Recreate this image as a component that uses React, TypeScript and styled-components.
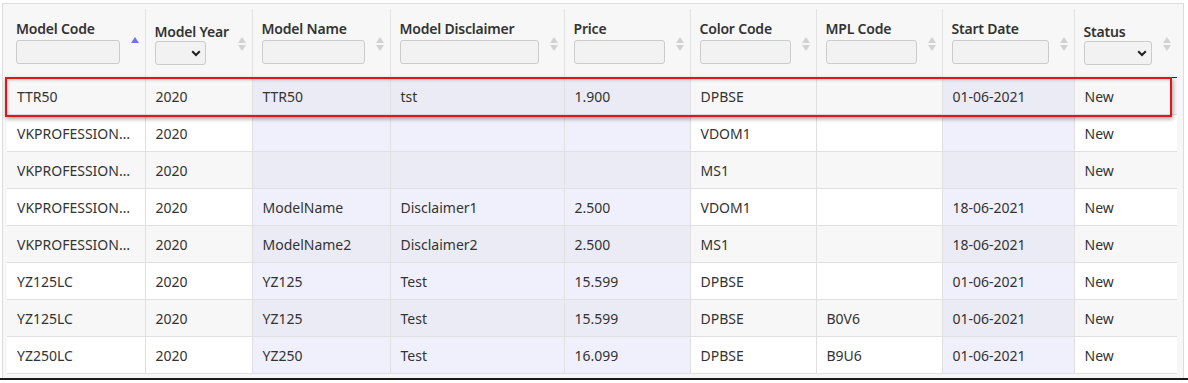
import styled, { createGlobalStyle } from 'styled-components';

type SortState = 'asc' | 'none';

interface Column {
  title: string;
  filter: 'input' | 'select';
  selectWidth?: number;
  sort: SortState;
  tinted?: boolean;
  width: number;
}

const columns: Column[] = [
  { title: 'Model Code', filter: 'input', sort: 'asc', width: 138 },
  { title: 'Model Year', filter: 'select', selectWidth: 51, sort: 'none', width: 107 },
  { title: 'Model Name', filter: 'input', sort: 'none', tinted: true, width: 138 },
  { title: 'Model Disclaimer', filter: 'input', sort: 'none', tinted: true, width: 174 },
  { title: 'Price', filter: 'input', sort: 'none', tinted: true, width: 126 },
  { title: 'Color Code', filter: 'input', sort: 'none', width: 126 },
  { title: 'MPL Code', filter: 'input', sort: 'none', width: 126 },
  { title: 'Start Date', filter: 'input', sort: 'none', tinted: true, width: 132 },
  { title: 'Status', filter: 'select', sort: 'none', width: 103 },
];

const rows: string[][] = [
  ['TTR50', '2020', 'TTR50', 'tst', '1.900', 'DPBSE', '', '01-06-2021', 'New'],
  ['VKPROFESSIONAL', '2020', '', '', '', 'VDOM1', '', '', 'New'],
  ['VKPROFESSIONAL', '2020', '', '', '', 'MS1', '', '', 'New'],
  ['VKPROFESSIONAL', '2020', 'ModelName', 'Disclaimer1', '2.500', 'VDOM1', '', '18-06-2021', 'New'],
  ['VKPROFESSIONAL', '2020', 'ModelName2', 'Disclaimer2', '2.500', 'MS1', '', '18-06-2021', 'New'],
  ['YZ125LC', '2020', 'YZ125', 'Test', '15.599', 'DPBSE', '', '01-06-2021', 'New'],
  ['YZ125LC', '2020', 'YZ125', 'Test', '15.599', 'DPBSE', 'B0V6', '01-06-2021', 'New'],
  ['YZ250LC', '2020', 'YZ250', 'Test', '16.099', 'DPBSE', 'B9U6', '01-06-2021', 'New'],
];

const SortIcon = ({ state }: { state: SortState }) => (
  <SortSvg width="8" height="14" viewBox="0 0 8 14">
    <path d="M4 0 L8 6 L0 6 Z" fill={state === 'asc' ? '#7474d9' : '#d2d2d2'} />
    {state === 'none' && <path d="M0 8 L8 8 L4 14 Z" fill="#d2d2d2" />}
  </SortSvg>
);

const Chevron = () => (
  <ChevronSvg width="10" height="7" viewBox="0 0 10 7">
    <path d="M1.2 1.2 L5 5 L8.8 1.2" fill="none" stroke="#1f1f1f" strokeWidth="2" />
  </ChevronSvg>
);

export default function App() {
  return (
    <>
      <GlobalStyle />
      <Page>
        <Frame>
          <TableBox>
            <Table>
              <colgroup>
                {columns.map((c) => (
                  <col key={c.title} style={{ width: c.width }} />
                ))}
              </colgroup>
              <thead>
                <tr>
                  {columns.map((c) => (
                    <Th key={c.title}>
                      <HeadInner>
                        <HeadMain $select={c.filter === 'select'}>
                          <HeadTitle>{c.title}</HeadTitle>
                          {c.filter === 'input' ? (
                            <FilterInput type="text" />
                          ) : (
                            <SelectWrap $width={c.selectWidth}>
                              <FilterSelect>
                                <option value="" />
                              </FilterSelect>
                              <Chevron />
                            </SelectWrap>
                          )}
                        </HeadMain>
                        <SortIcon state={c.sort} />
                      </HeadInner>
                    </Th>
                  ))}
                </tr>
              </thead>
              <tbody>
                {rows.map((r, ri) => (
                  <Tr key={ri} $odd={ri % 2 === 0}>
                    {r.map((v, ci) => (
                      <Td key={ci} $tinted={!!columns[ci].tinted} $odd={ri % 2 === 0}>
                        {v}
                      </Td>
                    ))}
                  </Tr>
                ))}
              </tbody>
            </Table>
            <RowMark />
          </TableBox>
        </Frame>
        <BottomRule />
      </Page>
    </>
  );
}

const GlobalStyle = createGlobalStyle`
  html, body {
    margin: 0;
    padding: 0;
    background: #ffffff;
  }
  body {
    font-family: "Noto Sans", "Open Sans", sans-serif;
    color: #333333;
  }
`;

const Page = styled.div`
  display: flex;
  flex-direction: column;

  width: 1188px;
  height: 383px;

  padding-top: 3px;
  box-sizing: border-box;
`;

const Frame = styled.div`
  box-sizing: border-box;

  width: 1182px;
  height: 375px;

  margin-left: 2px;
  padding: 5px 5px 0 4px;

  background: #f7f7f7;
  border: 1px solid #dcdcdc;
  border-bottom: none;
  overflow: hidden;
`;

const BottomRule = styled.div`
  height: 2px;
  background: #1b1b1b;
`;

const TableBox = styled.div`
  position: relative;
  width: 1170px;
`;

const Table = styled.table`
  width: 1170px;

  table-layout: fixed;
  border-collapse: collapse;
  border-spacing: 0;
`;

const Th = styled.th`
  box-sizing: content-box;

  height: 56px;
  padding: 0 6px 12px 9px;

  vertical-align: bottom;
  text-align: left;

  background: #f7f7f7;
  border-left: 1px solid #e3e3e3;
  border-bottom: 1px solid #2a2a2a;

  &:first-child {
    border-left: none;
  }
`;

const HeadInner = styled.div`
  display: flex;
  align-items: flex-end;
  gap: 11px;
`;

const HeadMain = styled.div<{ $select: boolean }>`
  display: flex;
  flex: 1;
  flex-direction: column;
  gap: ${(p) => (p.$select ? '0px' : '2px')};

  min-width: 0;
`;

const HeadTitle = styled.div`
  font-size: 14px;
  font-weight: 600;
  line-height: 18px;

  color: #333333;
  white-space: nowrap;
  letter-spacing: -0.2px;
`;

const FilterInput = styled.input`
  box-sizing: border-box;

  width: 100%;
  height: 24px;
  margin: 0 0 1px 0;
  padding: 0 6px;

  font-family: inherit;

  background: #f2f2f2;
  border: 1px solid #cccccc;
  border-radius: 3px;
  outline: none;
`;

const SelectWrap = styled.div<{ $width?: number }>`
  position: relative;

  width: ${(p) => (p.$width ? `${p.$width}px` : '100%')};
  height: 24px;
`;

const FilterSelect = styled.select`
  box-sizing: border-box;
  appearance: none;

  width: 100%;
  height: 24px;
  margin: 0;
  padding: 0 6px;

  font-family: inherit;

  background: #f2f2f2;
  border: 1px solid #cccccc;
  border-radius: 3px;
  outline: none;
`;

const ChevronSvg = styled.svg`
  position: absolute;
  top: 9px;
  right: 5px;

  pointer-events: none;
`;

const SortSvg = styled.svg`
  flex-shrink: 0;
  margin-bottom: 14px;
`;

const Tr = styled.tr<{ $odd: boolean }>`
  background: ${(p) => (p.$odd ? '#f7f7f7' : '#ffffff')};
`;

const Td = styled.td<{ $tinted: boolean; $odd: boolean }>`
  box-sizing: content-box;

  height: 34px;
  padding: 2px 10px 0 10px;

  font-size: 14px;
  line-height: 18px;

  color: #333333;
  white-space: nowrap;
  overflow: hidden;
  text-overflow: ellipsis;

  background: ${(p) =>
    p.$tinted ? (p.$odd ? '#ebebf5' : '#f0f0fc') : 'transparent'};
  border-left: 1px solid #e0e0e0;
  border-bottom: 1px solid #e0e0e0;

  &:first-child {
    border-left: none;
  }
`;

const RowMark = styled.div`
  position: absolute;
  top: 68px;
  left: -2px;

  box-sizing: border-box;
  width: 1167px;
  height: 40px;

  border: 2px solid #e4141b;
  box-shadow: 1px 2px 4px rgba(0, 0, 0, 0.35), inset 1px 1px 3px rgba(0, 0, 0, 0.2);
  pointer-events: none;
`;
